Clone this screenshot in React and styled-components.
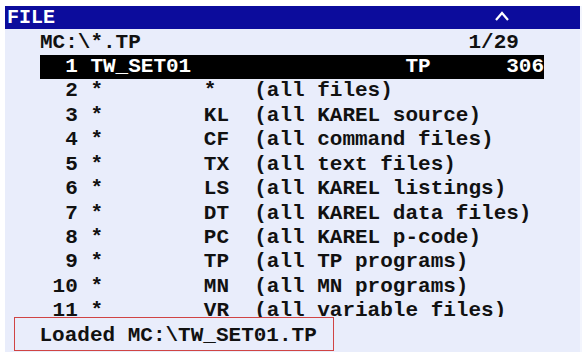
import React from "react";
import styled, { createGlobalStyle } from "styled-components";

const Global = createGlobalStyle`
  html, body { margin: 0; padding: 0; background: #ffffff; }
  body { width: 587px; height: 352px; overflow: hidden; }
`;

const Panel = styled.div`
  margin: 6px 0 0 5px;
  width: 575px;
  height: 346px;
  background: #e9edfb;
  display: flex;
  flex-direction: column;
  font-family: "Liberation Mono", "Courier New", monospace;
  font-weight: bold;
  font-size: 21px;
  color: #111111;
  box-shadow: 2px 0 0 #f3f5fd;
`;

const TitleBar = styled.div`
  height: 23px;
  flex-shrink: 0;
  background: #0c0c9c;
  color: #ffffff;
  display: flex;
  align-items: center;
  justify-content: space-between;
  padding: 0 70px 0 2px;
  font-size: 20px;
  line-height: 23px;
`;

const Caret = styled.svg`
  width: 16px;
  height: 12px;
  display: block;
  margin-top: -4px;
`;

const List = styled.div`
  flex: 1;
  min-height: 0;
  overflow: hidden;
  padding: 1.5px 0 0 35px;
`;

const Row = styled.div`
  display: grid;
  grid-template-columns: ${(p) => p.$cols};
  width: 40ch;
  height: 24.45px;
  line-height: 24.45px;
  white-space: pre;
  background: ${(p) => (p.$selected ? "#000000" : "transparent")};
  color: ${(p) => (p.$selected ? "#ffffff" : "inherit")};
`;

const Cell = styled.span`
  text-align: ${(p) => (p.$right ? "right" : "left")};
  overflow: visible;
`;

const Status = styled.div`
  flex-shrink: 0;
  height: 34px;
  width: 320px;
  box-sizing: border-box;
  margin: 0 0 1px 9px;
  border: 1.5px solid #d04444;
  background: #e9edfb;
  padding: 2px 0 0 24.5px;
  line-height: 31px;
  white-space: pre;
`;

const FILTERS = [
  ["*", "(all files)"],
  ["KL", "(all KAREL source)"],
  ["CF", "(all command files)"],
  ["TX", "(all text files)"],
  ["LS", "(all KAREL listings)"],
  ["DT", "(all KAREL data files)"],
  ["PC", "(all KAREL p-code)"],
  ["TP", "(all TP programs)"],
  ["MN", "(all MN programs)"],
  ["VR", "(all variable files)"],
];

const HEAD_COLS = "34ch 4ch 2ch";
const FILE_COLS = "3ch 1ch 25ch 8ch 3ch";
const FILTER_COLS = "3ch 1ch 9ch 4ch 23ch";

export default function App() {
  return (
    <>
      <Global />
      <Panel>
        <TitleBar>
          <span>FILE</span>
          <Caret viewBox="0 0 16 12">
            <polyline
              points="2,10 8,3 14,10"
              fill="none"
              stroke="#ffffff"
              strokeWidth="2.2"
            />
          </Caret>
        </TitleBar>
        <List>
          <Row $cols={HEAD_COLS}>
            <Cell>MC:\*.TP</Cell>
            <Cell $right>1/29</Cell>
            <Cell />
          </Row>
          <Row $cols={FILE_COLS} $selected>
            <Cell $right>1</Cell>
            <Cell />
            <Cell>TW_SET01</Cell>
            <Cell>TP</Cell>
            <Cell $right>306</Cell>
          </Row>
          {FILTERS.map(([type, desc], i) => (
            <Row key={type + i} $cols={FILTER_COLS}>
              <Cell $right>{i + 2}</Cell>
              <Cell />
              <Cell>*</Cell>
              <Cell>{type}</Cell>
              <Cell>{desc}</Cell>
            </Row>
          ))}
        </List>
        <Status>Loaded MC:\TW_SET01.TP</Status>
      </Panel>
    </>
  );
}
